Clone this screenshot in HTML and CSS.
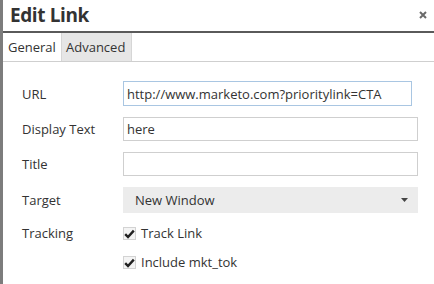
FILE: index.html
```html
<!DOCTYPE html>
<html>
<head>
<meta charset="utf-8">
<link rel="stylesheet" href="styles.css">
</head>
<body>
<div class="dialog">
  <div class="header">
    <h1 class="title">Edit Link</h1>
    <svg class="close" width="8" height="8" viewBox="0 0 8 8"><path d="M1 1L7 7M7 1L1 7" stroke="#6a6a6a" stroke-width="2"/></svg>
  </div>
  <div class="tabs">
    <div class="tab active">General</div>
    <div class="tab">Advanced</div>
  </div>
  <div class="form">
    <div class="row">
      <div class="label">URL</div>
      <div class="input url">http://www.marketo.com?prioritylink=CTA</div>
    </div>
    <div class="row">
      <div class="label">Display Text</div>
      <div class="input">here</div>
    </div>
    <div class="row">
      <div class="label">Title</div>
      <div class="input"></div>
    </div>
    <div class="row">
      <div class="label">Target</div>
      <div class="select"><span>New Window</span>
        <svg class="caret" width="7" height="4" viewBox="0 0 7 4"><path d="M0 0H7L3.5 4Z" fill="#444"/></svg>
      </div>
    </div>
    <div class="row check-row">
      <div class="label">Tracking</div>
      <div class="check"><span class="box"><svg width="11" height="10" viewBox="0 0 11 10"><path d="M1.2 5.2L4 8L9.8 1.6" fill="none" stroke="#222" stroke-width="2.4"/></svg></span>Track Link</div>
    </div>
    <div class="row check-row">
      <div class="label"></div>
      <div class="check"><span class="box"><svg width="11" height="10" viewBox="0 0 11 10"><path d="M1.2 5.2L4 8L9.8 1.6" fill="none" stroke="#222" stroke-width="2.4"/></svg></span>Include mkt_tok</div>
    </div>
  </div>
</div>
</body>
</html>
```

FILE: styles.css
```css
html, body {
  margin: 0;
  padding: 0;
  background: #fff;
}
body {
  font-family: "Open Sans", "Liberation Sans", sans-serif;
  color: #333;
  font-size: 13px;
}
.dialog {
  width: 434px;
  height: 284px;
  box-sizing: border-box;
  border-left: 3px solid #7c7c7c;
  display: flex;
  flex-direction: column;
}
.header {
  height: 31px;
  border-bottom: 2px solid #5a5a5a;
  display: flex;
  align-items: center;
  justify-content: space-between;
  padding: 0 7px 0 7px;
}
.title {
  margin: 0;
  font-size: 19px;
  font-weight: 700;
  color: #333;
  line-height: 26px;
  margin-top: -2px;
  letter-spacing: -0.4px;
}
.close {
  margin-top: -1px;
}
.tabs {
  height: 28px;
  border-bottom: 1px solid #cfcfcf;
  display: flex;
}
.tab {
  display: flex;
  align-items: center;
  padding: 0 5px;
  font-size: 13px;
  color: #333;
}
.tab.active {
  width: 48px;
}
.tab:not(.active) {
  background: #e6e6e6;
  border-left: 1px solid #d6d6d6;
  border-right: 1px solid #d6d6d6;
  padding: 0 4px 0 4px;
  width: 61px;
}
.form {
  padding: 19px 16px 0 19px;
  display: flex;
  flex-direction: column;
  gap: 11px;
}
.row {
  display: flex;
  align-items: center;
}
.label {
  width: 101px;
  flex: none;
}
.input {
  flex: 1;
  height: 24px;
  box-sizing: border-box;
  border: 1px solid #cfcfcf;
  padding: 0 3px;
  display: flex;
  align-items: center;
}
.input.url {
  flex: none;
  width: 289px;
  height: 25px;
  border-color: #a9c6e2;
}
.select {
  flex: 1;
  height: 26px;
  background: #ececec;
  display: flex;
  align-items: center;
  justify-content: space-between;
  padding: 0 10px 0 12px;
}
.caret {
  display: block;
}
.check-row {
  height: 18px;
}
.check {
  display: flex;
  align-items: center;
}
.box {
  width: 13px;
  height: 13px;
  box-sizing: border-box;
  border: 1px solid #d3d3d3;
  background: #f4f4f4;
  display: flex;
  align-items: center;
  justify-content: center;
  margin-right: 5px;
}
.box svg {
  display: block;
  margin-top: 1px;
}
```
